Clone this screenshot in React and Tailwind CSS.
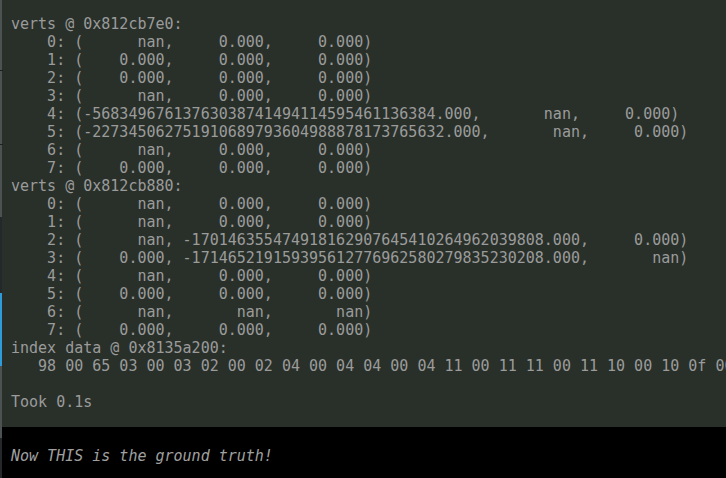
import React from "react";

const lines = [
  "verts @ 0x812cb7e0:",
  "    0: (      nan,     0.000,     0.000)",
  "    1: (    0.000,     0.000,     0.000)",
  "    2: (    0.000,     0.000,     0.000)",
  "    3: (      nan,     0.000,     0.000)",
  "    4: (-56834967613763038741494114595461136384.000,       nan,     0.000)",
  "    5: (-227345062751910689793604988878173765632.000,       nan,     0.000)",
  "    6: (      nan,     0.000,     0.000)",
  "    7: (    0.000,     0.000,     0.000)",
  "verts @ 0x812cb880:",
  "    0: (      nan,     0.000,     0.000)",
  "    1: (      nan,     0.000,     0.000)",
  "    2: (      nan, -170146355474918162907645410264962039808.000,     0.000)",
  "    3: (    0.000, -171465219159395612776962580279835230208.000,       nan)",
  "    4: (      nan,     0.000,     0.000)",
  "    5: (    0.000,     0.000,     0.000)",
  "    6: (      nan,       nan,       nan)",
  "    7: (    0.000,     0.000,     0.000)",
  "index data @ 0x8135a200:",
  "   98 00 65 03 00 03 02 00 02 04 00 04 04 00 04 11 00 11 11 00 11 10 00 10 0f 00 0f 0e 00",
  "",
  "Took 0.1s",
];

export default function App() {
  return (
    <div className="flex w-[726px] h-[478px] overflow-hidden bg-[#29302a]">
      <div className="flex flex-col w-[2px] shrink-0 h-[478px]">
        <div className="h-[70px] bg-[#4c5151]" />
        <div className="h-[1px] w-[3px] bg-[#1e2020]" />
        <div className="h-[73px] bg-[#4c5151]" />
        <div className="h-[1px] w-[3px] bg-[#1e2020]" />
        <div className="h-[72px] bg-[#4c5151]" />
        <div className="h-[76px] bg-[#25282b]" />
        <div className="h-[73px] bg-[#2f9bd8]" />
        <div className="h-[72px] bg-[#4c5151]" />
        <div className="flex-1 bg-[#25282b]" />
      </div>
      <div className="flex flex-col flex-1 min-w-0">
        <div
          className="h-[427px] pt-[15px] pl-[9px] text-[15px] leading-[18px] text-[#9b9b9b] whitespace-pre overflow-hidden"
          style={{ fontFamily: '"DejaVu Sans Mono", monospace' }}
        >
          {lines.map((l, i) => (
            <div key={i} className="h-[18px]">
              {l}
            </div>
          ))}
        </div>
        <div
          className="flex-1 bg-black pt-[20px] pl-[9px] text-[15px] leading-[18px] italic text-[#a0a0a0] whitespace-pre"
          style={{ fontFamily: '"DejaVu Sans Mono", monospace' }}
        >
          Now THIS is the ground truth!
        </div>
      </div>
    </div>
  );
}
